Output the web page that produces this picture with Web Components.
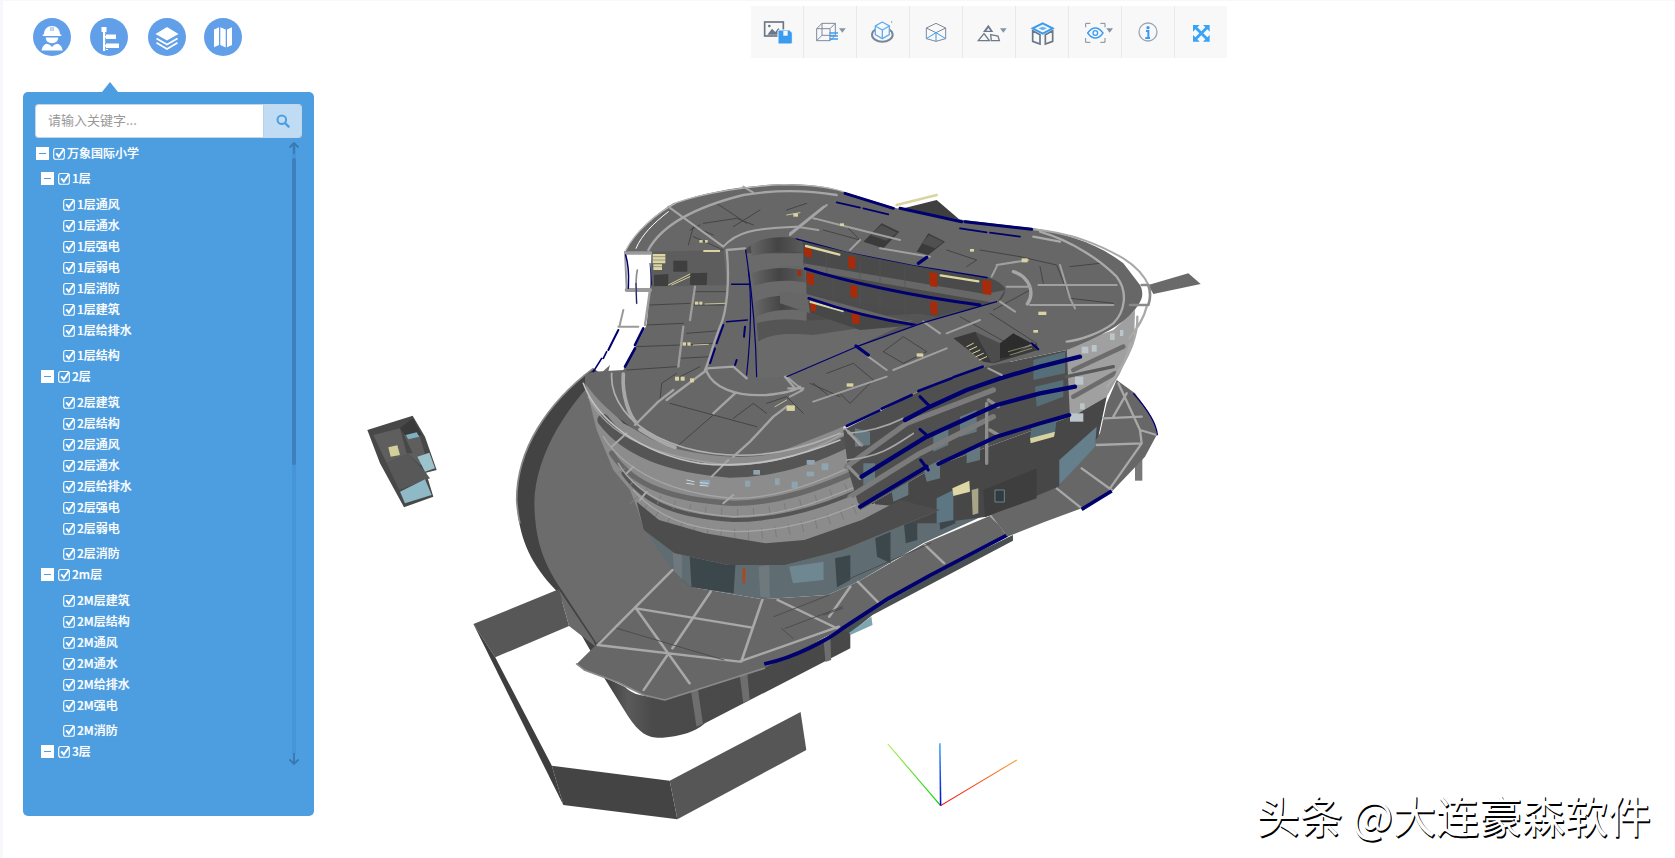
<!DOCTYPE html>
<html lang="zh"><head><meta charset="utf-8"><title>BIM</title>
<style>html,body{margin:0;padding:0;background:#f6f8fc;overflow:hidden}</style></head>
<body>
<bim-app>
  <bim-tree>
    <bim-node kind="root" label="万象国际小学">
      <bim-node kind="group" label="1层">
        <bim-node label="1层通风"></bim-node><bim-node label="1层通水"></bim-node><bim-node label="1层强电"></bim-node><bim-node label="1层弱电"></bim-node><bim-node label="1层消防"></bim-node><bim-node label="1层建筑"></bim-node><bim-node label="1层给排水"></bim-node><bim-node last label="1层结构"></bim-node>
      </bim-node>
      <bim-node kind="group" label="2层">
        <bim-node label="2层建筑"></bim-node><bim-node label="2层结构"></bim-node><bim-node label="2层通风"></bim-node><bim-node label="2层通水"></bim-node><bim-node label="2层给排水"></bim-node><bim-node label="2层强电"></bim-node><bim-node label="2层弱电"></bim-node><bim-node last label="2层消防"></bim-node>
      </bim-node>
      <bim-node kind="group" label="2m层">
        <bim-node label="2M层建筑"></bim-node><bim-node label="2M层结构"></bim-node><bim-node label="2M通风"></bim-node><bim-node label="2M通水"></bim-node><bim-node label="2M给排水"></bim-node><bim-node label="2M强电"></bim-node><bim-node last label="2M消防"></bim-node>
      </bim-node>
      <bim-node kind="group" label="3层"></bim-node>
    </bim-node>
  </bim-tree>
</bim-app>
<script>
const FONT = '"Noto Sans CJK SC","Noto Sans",sans-serif';
function def(name, html, onInit){
  customElements.define(name, class extends HTMLElement{
    connectedCallback(){
      if(this.shadowRoot) return;
      const r=this.attachShadow({mode:'open'});
      r.innerHTML = typeof html==='function' ? html(this) : html;
      if(onInit) onInit(this,r);
    }
  });
}

/* ---------- 3D model ---------- */
const lines=(c,w,ds)=>`<path fill="none" stroke="${c}" stroke-width="${w}" stroke-linecap="round" d="${ds}"/>`;
const MODEL=`
<style>:host{display:block;position:absolute;left:337px;top:169px;width:1000px;height:688px}svg{display:block}</style>
<svg width="1000" height="688" viewBox="0 0 3000 2064" stroke-linejoin="round">
<defs>
<linearGradient id="w" x1="0" x2="1" y1="0" y2="0"><stop offset="0" stop-color="#666"/><stop offset=".5" stop-color="#444"/><stop offset="1" stop-color="#5c5c5c"/></linearGradient>
<linearGradient id="base" x1="0" x2="1" y1="0" y2="0"><stop offset="0" stop-color="#3c3c3c"/><stop offset=".1" stop-color="#5a5a5a"/><stop offset=".2" stop-color="#4a4a4a"/><stop offset="1" stop-color="#484848"/></linearGradient>
<linearGradient id="ax1" gradientUnits="userSpaceOnUse" x1="1256" y1="917" x2="1118" y2="732"><stop offset="0" stop-color="#00d000"/><stop offset="1" stop-color="#a8f050"/></linearGradient>
<linearGradient id="ax2" gradientUnits="userSpaceOnUse" x1="1256" y1="917" x2="1254" y2="730"><stop offset="0" stop-color="#0000e0"/><stop offset="1" stop-color="#40a8f0"/></linearGradient>
<linearGradient id="ax3" gradientUnits="userSpaceOnUse" x1="1256" y1="917" x2="1455" y2="780"><stop offset="0" stop-color="#f00000"/><stop offset="1" stop-color="#f8a030"/></linearGradient>
</defs>

<!-- small pavilion -->
<path fill="#484848" d="M82 780L218 737L255 800L290 900L258 908L280 980L192 1012L120 880Z"/>
<path fill="#5e5e5e" d="M100 795L180 775L200 850L218 850L192 795L218 790L240 800L262 880L240 885L205 852L140 880Z"/>
<path fill="#3a3a3a" d="M180 775L218 745L245 795L200 800Z"/>
<path fill="#585858" d="M140 880L205 852L255 905L270 925L178 960Z"/>
<path fill="#8fb9c6" d="M180 965L255 928L275 975L195 1000Z"/>
<path fill="#9cc2cc" d="M232 860L268 848L285 895L255 905Z"/>
<path fill="#7fb0c0" d="M197 795L230 787L238 800L205 808Z"/>
<path fill="#d4cf9a" d="M145 832L172 826L180 855L152 860Z"/>

<!-- big terrace disc -->
<path fill="#434343" d="M760 595C620 700 530 840 530 990C535 1100 570 1180 647 1260L750 1440L790 1520L1000 1500L1100 1100L900 700Z"/>
<path fill="#6c6c6c" d="M810 585C690 690 585 850 583 1000C585 1110 610 1180 665 1260L770 1420L1010 1200L900 1000L780 700Z"/>
<path fill="none" stroke="#8a8a8a" stroke-width="5" d="M760 595C620 700 530 840 530 990C532 1020 535 1040 540 1060"/>

<!-- outer retaining walls -->
<g transform="translate(360 990) scale(1.148 1)">
<path fill="#575757" d="M35 372L258 268L285 378L92 472Z"/>
<path fill="#3e3e3e" d="M35 372L92 472L240 797L270 915Z"/>
<path fill="#6a6a6a" d="M258 268L285 378L355 440L350 425Z"/>
<path fill="#444" d="M240 797L548 842L568 958L270 915Z"/>
<path fill="#565656" d="M548 842L890 636L905 750L568 958Z"/>

<!-- base block -->
<path fill="url(#base)" d="M375 530L440 650C470 700 490 715 530 713C590 708 620 690 640 670L1020 445L1020 380L800 490L530 600L430 560Z"/>
<path fill="#6e6e6e" d="M604 575L622 570L635 672L618 680ZM730 515L750 510L757 600L740 608ZM950 420L968 415L970 480L955 486Z"/>
<path fill="#fff" d="M420 545C440 580 470 590 515 590L480 570Z"/>
<path fill="#4a4f52" d="M985 385L1230 225L1445 105L1445 122L1078 345L1020 400Z"/>
<path fill="#7fa5b0" d="M1017 398L1075 350L1078 375L1020 405Z"/>

<!-- glazing under the slab -->
<path fill="#5f6c72" d="M465 60L555 210L600 260L790 298L960 285L1040 245L1210 130L1420 20L1300 -30L1000 130L800 190L600 160Z"/>
<path fill="#3c474c" d="M600 165L720 190L715 280L605 262ZM980 175L1020 165L1020 240L985 262ZM1085 115L1125 95L1125 190L1090 170ZM1160 70L1195 50L1195 120L1165 130ZM1250 25L1290 5L1295 70L1255 90Z"/>
<path fill="#6f8791" d="M860 200L950 185L950 240L870 250Z"/>
<path fill="#6e787d" d="M780 200L808 195L810 295L785 290ZM555 150L580 160L580 240L560 215Z"/>
<path fill="#a84a20" d="M738 205L746 205L745 250L738 250Z"/>

<!-- lower terrace plate -->
<path fill="#676767" d="M555 210L305 492L325 510L415 548L480 585L535 600L795 505L1000 385L1230 230L1430 110L1390 45L1215 130L1040 245L960 285L790 298L600 260Z"/>
${lines('#a8a8a8',7,'M555 210L360 435M460 325L760 382M655 275L555 445M460 325L600 550M360 435L730 485M545 460L480 570M790 300L735 485M730 485L990 380M830 300L985 385M1040 245L1095 310M1215 135L1265 190M1385 45L1435 100M1020 260L965 350')}
${lines('#4a4a4a',2.5,'M410 385L690 480M820 350L965 285M850 385L1000 320M840 385L870 415M950 345L1000 325M1000 245L1230 130')}
${lines('#8a8a8a',5,'M305 492L325 510L415 548L480 585L535 600L795 505')}
<path fill="none" stroke="#00006e" stroke-width="11" d="M795 492C880 470 960 420 1000 385C1060 340 1100 310 1120 295L1230 225L1430 105"/>

<!-- axis triad -->
<path fill="none" stroke="url(#ax1)" stroke-width="3" d="M1256 917L1118 732"/>
<path fill="none" stroke="url(#ax2)" stroke-width="4" d="M1256 917L1254 730"/>
<path fill="none" stroke="url(#ax3)" stroke-width="3" d="M1256 917L1455 780"/>
</g>

<!-- right terrace & wall under floors -->
<g transform="translate(1320 0)">
<rect x="1065" y="860" width="22" height="72" fill="#787878"/>
<path fill="#676767" d="M1010 630L1065 670C1110 730 1130 760 1130 795L1095 860L995 965L905 1015L795 1055L682 1100L630 1030L830 950L960 790L980 700Z"/>
${lines('#a8a8a8',7,'M1015 640L1080 780L1130 795M1040 670L1000 740M970 745L1085 740M950 825L1085 820M1080 780L1085 820L990 955M905 895L995 960M830 955L905 1015')}
<path fill="none" stroke="#00006e" stroke-width="4" d="M1060 670C1100 715 1130 760 1132 795"/>
<path fill="none" stroke="#00006e" stroke-width="11" d="M905 1018L995 963"/>
<path fill="#474747" d="M240 1020L475 885L870 740L980 680L955 800L835 950L620 1040L470 1060L300 1060Z"/>
<path fill="#65808c" d="M838 870L950 770L945 830L838 945Z"/>
<path fill="#3e3e3e" d="M610 960L770 895L770 985L615 1040Z"/>
<path fill="#5d7684" d="M470 985L520 960L520 1050L470 1060Z"/>
<path fill="#dcd7a4" d="M517 955L568 932L570 965L520 978Z"/>
<path fill="#a8a488" d="M575 960L595 955L595 1030L578 1035Z"/>
<rect x="645" y="960" width="28" height="36" fill="#2f3b40" stroke="#8aa" stroke-width="2"/>
<path fill="#cfcb9c" d="M240 1020L285 1000L285 1040L240 1050Z"/>
</g>

<!-- stacked floors, left lobe -->
<path fill="#8c8c8c" d="M735 640L770 780L820 900L870 960L894 1020L911 1080L1003 1150L1164 1185L1336 1185L1508 1140L1800 1020L1570 1000L1530 880L1510 770L1250 855L1000 835L850 760Z"/>
${lines('#555',36,'M790 750C850 830 960 890 1170 905C1300 905 1420 865 1520 815')}
${lines('#a2a2a2',4,'M745 680C800 800 960 865 1170 885C1300 885 1420 845 1510 790')}
${lines('#686868',16,'M815 850C880 950 1000 990 1180 1000C1320 1000 1450 950 1560 900')}
${lines('#555',12,'M850 910C920 1010 1030 1040 1180 1050C1320 1050 1450 1010 1560 960')}
<path fill="none" stroke="#7c7c7c" stroke-width="34" stroke-dasharray="3 38" d="M880 990C950 1060 1040 1085 1180 1095C1320 1095 1450 1060 1560 1010"/>
<path fill="none" stroke="#7c7c7c" stroke-width="26" stroke-dasharray="3 45" d="M845 900C915 1000 1030 1020 1180 1030C1320 1030 1450 985 1560 935"/>
${lines('#a5a5a5',4,'M790 800C860 910 1000 970 1180 985C1320 985 1450 930 1555 880M835 880C900 990 1030 1030 1180 1040C1330 1040 1450 990 1560 945M880 960C950 1040 1040 1075 1180 1085C1320 1085 1450 1050 1560 1000')}
<path fill="#4d4d4d" d="M890 995L957 1050L1095 1090L1278 1120L1393 1110L1565 1050L1680 990L1800 1020L1508 1140L1336 1185L1164 1185L1003 1150L911 1080Z"/>
<g fill="#8fa4b0">
<rect x="1080" y="930" width="30" height="14"/><rect x="1240" y="900" width="20" height="14"/><rect x="1355" y="935" width="18" height="20"/><rect x="1215" y="932" width="16" height="18"/><rect x="1305" y="925" width="14" height="20"/><rect x="1400" y="905" width="22" height="14"/><rect x="1445" y="880" width="20" height="20"/><rect x="1400" y="870" width="24" height="14"/>
</g>
${lines('#cfd8de',3,'M1040 930L1062 935M1040 940L1062 943M1080 938L1104 940M1080 946L1104 948')}
${lines('#a8a8a8',6,'M860 790L815 830M880 890L860 910M1165 870L1115 920M920 965L900 990M1180 975L1150 1000')}

<!-- courtyard interior -->
<path fill="#4c4c4c" d="M1215 200H2010V640H1215Z"/>
<path fill="#6a6a6a" d="M1215 250H1400V640H1215Z"/>
<path fill="url(#w)" d="M1232 222C1280 200 1340 200 1385 210L1395 250C1340 240 1290 245 1235 258Z"/>
<path fill="url(#w)" d="M1235 310C1280 292 1340 292 1395 297L1400 338C1340 328 1290 332 1240 348Z"/>
<path fill="url(#w)" d="M1245 395C1290 375 1350 372 1400 380L1405 422C1340 415 1290 420 1248 440Z"/>
<path fill="#555" d="M1250 460C1300 445 1350 445 1400 452L1900 420L1700 505L1400 510C1340 490 1290 495 1255 515Z"/>
<path fill="#6a6a6a" d="M1255 625L1255 515C1290 492 1340 488 1420 495L1720 450L1340 630Z"/>
<g transform="translate(1320 0)">
<path fill="#4a4a4a" d="M70 215L620 320L640 375L70 285Z"/>
<path fill="#676767" d="M70 280L615 372L675 360L650 400L80 300Z"/>
<path fill="#4d4d4d" d="M78 300L590 405L470 440L80 370Z"/>
<path fill="#676767" d="M0 285L70 290L80 300L0 292ZM0 365L80 372L420 465L240 480L0 400Z"/>
<path fill="#474747" d="M85 392L410 465L240 480L90 430Z"/>
<g fill="#a82a08">
<path d="M72 232L95 238L95 264L74 258ZM205 258L226 262L226 298L205 294ZM448 305L472 310L472 352L450 348ZM606 330L634 334L634 375L608 372Z"/>
<path d="M80 308L102 312L102 346L82 342ZM53 300L63 300L63 318L53 318ZM210 345L232 349L232 385L212 381ZM450 393L472 398L472 436L452 432Z"/>
<path d="M90 398L108 402L108 425L92 422ZM215 428L238 432L238 463L216 460Z"/>
</g>
${lines('#555',2,'M140 250L140 310M300 270L300 340M375 290L375 370M240 270L240 330M160 320L160 390M240 350L240 400M375 380L375 440M300 350L300 420')}
${lines('#ddd8a2',7,'M78 228L178 254M482 316L595 334M92 396L188 423')}
${lines('#00006e',9,'M52 205C200 245 400 285 620 320')}
${lines('#00006e',9,'M76 296C200 335 400 380 600 405')}
${lines('#00006e',8,'M86 385C200 425 300 450 412 466')}
</g>

<!-- right-hand wing behind top plate -->
<path fill="#6a6a6a" d="M2425 345L2545 310L2582 342L2440 372Z"/>
<path fill="#3f3f3f" d="M1790 90L1860 150L1670 120Z"/>
${lines('#d9d4a0',8,'M1670 105L1790 75')}

<!-- side elevation, right of the bend -->
<g transform="translate(1320 0)">
<path fill="#4f4f4f" d="M190 780L415 665L620 590L860 540L905 560L980 620L980 680L870 740L475 885L240 1020L205 900Z"/>
<path fill="#a0a0a0" d="M860 530L1000 480L1065 420L1062 520L1020 610L980 680L870 745Z"/>
${lines('#6c6c6c',14,'M880 600L1030 530M880 680L1005 610')}
${lines('#5a5a5a',10,'M860 620L1000 590')}
<g fill="#bcc6ca"><rect x="905" y="530" width="20" height="20"/><rect x="935" y="525" width="15" height="20"/><rect x="990" y="490" width="14" height="20"/><rect x="1020" y="480" width="10" height="18"/><rect x="885" y="620" width="25" height="24"/><rect x="870" y="730" width="40" height="25"/><rect x="900" y="700" width="14" height="18"/></g>
<path fill="#566e78" d="M760 570L855 545L855 610L760 630ZM765 650L850 630L850 680L770 710ZM755 770L830 745L825 790L750 805Z"/>
<path fill="#d7d3a0" d="M750 805L825 785L822 800L752 820Z"/>
<path fill="#66787f" d="M540 740L590 720L590 785L540 800ZM460 800L505 770L505 825L460 845ZM560 840L600 820L600 870L560 880ZM335 965L385 935L385 975L340 995ZM430 895L480 870L480 925L440 935ZM225 775L270 785L270 825L225 830ZM250 880L285 880L285 930L250 945Z"/>
${lines('#7b7b7b',16,'M200 890L380 760L640 660M210 980L420 850L640 740')}
${lines('#8d8d8d',10,'M625 690L655 710M630 780L655 795M205 785L245 825M205 890L240 925M210 985L240 1010M620 700L620 880')}
${lines('#a7a7a7',5,'M205 790C270 785 320 770 370 745M200 870C300 860 340 830 400 790')}
${lines('#00006e',13,'M375 750L450 710L560 660L660 625L780 590L900 560')}
${lines('#00006e',13,'M245 920L440 800L650 705L780 670L885 650')}
${lines('#00006e',12,'M240 1010L440 890M475 882L650 800L780 760L868 735')}
${lines('#00006e',9,'M420 680L450 710M420 778L445 800M422 870L445 900')}
${lines('#a9a9a9',7,'M1100 410C1090 450 1070 475 1048 505M1072 440C1075 500 1040 570 1010 610M1050 520C1040 580 1000 630 980 650')}
</g>

<!-- top plate -->
<path fill="#676767" fill-rule="evenodd" d="M855 245C885 190 940 135 1000 100C1100 65 1200 48 1330 42C1400 42 1460 48 1510 65L1670 115L1870 150L2080 175C2180 190 2280 225 2350 280L2400 345C2408 360 2408 375 2405 385C2390 425 2340 470 2270 500C2240 515 2210 528 2180 540L1940 590L1735 665L1510 770L1320 845C1240 870 1130 865 1000 835C900 800 800 730 735 640L735 615L760 605L850 600L920 465L930 350L935 245Z
M1215 240C1250 205 1310 195 1370 205L1520 245L1720 285L1940 320C1980 335 2000 350 1995 365C1990 385 1980 392 1970 395L1750 455L1550 530L1340 620L1250 625L1255 560L1250 450L1232 340Z"/>

<!-- wing, dark rooms -->
<path fill="#5d5d5d" d="M935 245L1150 240L1160 345L935 350Z"/>
<path fill="#3f3f3f" d="M1000 272L1042 272L1042 305L1000 305ZM942 315L985 312L985 348L942 348ZM1050 310L1102 308L1100 345L1050 345Z"/>
<path fill="#dcd7a2" d="M938 252H976V280H938ZM940 283H966V300H940Z"/>
${lines('#777',2,'M938 260H976M938 270H976M940 290H966')}
${lines('#d2cd9a',3,'M985 345L1050 312M995 345L1050 320')}
${lines('#9a9a9a',12,'M860 360L930 360')}
${lines('#9a9a9a',8,'M860 250L932 250')}
${lines('#9a9a9a',6,'M855 245L860 360M835 470L895 470M850 420L838 470')}
${lines('#8c8c8c',5,'M892 300C885 330 888 360 890 400')}

<!-- plate partitions -->
${lines('#3d3d3d',2.5,'M960 690L965 640L1010 610M990 700L1250 770M1120 735L1010 830M1180 745L1240 700L1280 730M930 405L1050 400M920 465L1030 460M890 530L1020 525M860 600L1010 590M1060 405L1160 405M1060 365L1160 365M1040 490L1140 482M1030 525L1120 520M1020 565L1110 560M1050 180L1080 165M1090 160L1190 145L1240 165M1180 170L1260 120M1340 120L1400 100M1045 225L1060 170L1120 195M1150 240L1060 200M1020 620L1080 590M1410 640L1500 680M1280 700L1340 680L1390 730M1130 100L1220 160')}
<g transform="translate(1320 0)">
${lines('#3d3d3d',2.5,'M100 640L150 680L180 670L210 700L280 630M140 610L220 580L280 630M310 545L370 580L440 545L370 500L310 545M540 440L700 530M630 430L770 520M720 260L830 285L870 385L1000 400M780 290L790 340M870 290L960 280M110 150L200 170L240 210L130 180M500 240L590 270L560 290M600 240L720 260M640 420L750 360')}
<path fill="#3b3b3b" d="M250 215L305 160L358 185L310 235ZM410 245L445 190L495 215L445 255Z"/>
<path fill="#505050" d="M270 195L305 165L352 188L318 212Z"/>
<path fill="#505050" d="M425 220L447 195L490 216L465 235Z"/>
<!-- stair void -->
<path fill="#3a3a3a" d="M520 505L585 485L700 550L770 520L775 540L640 580L610 575Z"/>
<path fill="#4c4c4c" d="M585 485L660 520L660 570L635 580Z"/>
<path fill="#2c2c2c" d="M660 520L700 490L755 520L690 560L660 565Z"/>
${lines('#d8d3a0',3,'M560 530L580 520M568 540L590 530M578 550L600 540M588 560L610 550M598 570L620 560')}
${lines('#b8b48a',2,'M685 545L755 525M690 555L755 535')}
${lines('#aaa',7,'M780 185C880 215 960 270 1010 320C1045 365 1035 425 1000 460C960 490 900 510 860 515')}
${lines('#a6a6a6',10,'M700 305C750 320 765 370 742 402')}
${lines('#a0a0a0',6,'M650 290L635 320M660 395L705 425M680 350L750 350M840 285L870 385L885 415M775 345L1010 345M750 405L1000 405M430 455L480 490M625 595L665 615M195 775L240 825M20 620L68 660L30 680M265 560L320 600M100 695L320 620M340 600L500 535M500 490L600 450M130 110L30 190M240 210L210 240M650 285L745 270M100 145L360 210M300 235L450 260M440 260L415 280M115 180L50 170')}
${lines('#aaa',7,'M760 200L840 215')}
${lines('#a8a8a8',6,'M760 178C880 190 960 225 1030 265C1070 290 1095 320 1108 350')}
${lines('#8a8a8a',8,'M1085 345L1105 345C1112 365 1112 385 1105 405L1050 405')}
${lines('#00006e',9,'M195 70L340 115M360 115L545 155M555 155L755 178')}
${lines('#00006e',5,'M170 97L240 113M250 115L325 133M540 175L620 187M630 188L720 200')}
${lines('#00006e',8,'M200 768L298 722M305 716L395 675M415 663L515 625M520 622L608 590')}
${lines('#00006e',3.5,'M20 620L230 530L430 458L650 395')}
${lines('#00006e',10,'M228 528L265 555M415 280L440 262')}
${lines('#00006e',6,'M755 520L775 538')}
<g fill="#d8d3a0"><rect x="725" y="265" width="18" height="12"/><rect x="775" y="425" width="24" height="10"/><rect x="760" y="480" width="14" height="8"/><rect x="410" y="550" width="20" height="10"/><rect x="200" y="640" width="20" height="10"/><rect x="20" y="708" width="24" height="14"/><rect x="570" y="237" width="12" height="8"/><rect x="180" y="160" width="12" height="8"/><rect x="40" y="130" width="14" height="10"/></g>
</g>

<!-- rings, left and centre -->
${lines('#fff',3,'M888 235C905 195 940 160 985 125')}
${lines('#a6a6a6',7,'M925 240C960 175 1050 115 1210 75C1300 60 1400 60 1490 75')}
${lines('#b5b5b5',4,'M858 240C885 185 950 130 1010 98C1090 70 1220 48 1330 44C1400 44 1460 50 1510 65')}
${lines('#a6a6a6',6,'M1150 230C1190 185 1240 175 1370 170M985 110L1150 230M1350 195L1460 105M1210 50L1240 68')}
${lines('#a4a4a4',7,'M1160 240C1170 330 1160 430 1140 470C1120 520 1105 580 1095 600M1160 240L1215 235')}
${lines('#9c9c9c',7,'M1065 350L1050 450M1030 470L1015 590M930 360L915 465')}
${lines('#b0b0b0',5,'M815 610C810 690 870 760 950 800C1050 850 1180 870 1320 845C1400 830 1450 810 1500 790')}
${lines('#a8a8a8',11,'M850 612C845 680 870 740 890 760M900 778C950 810 970 820 1005 832')}
${lines('#c0c0c0',5,'M730 640C770 750 900 850 1080 880C1250 900 1400 850 1500 810')}
${lines('#a4a4a4',7,'M885 765L955 695L1000 660M1100 600L980 690M1180 860L1230 815L1300 740L1340 710M1100 605C1120 650 1180 680 1280 675C1330 670 1370 660 1380 650M1100 595L1180 590M1180 590L1220 625M1120 730L1185 670M1335 620L1365 655M1345 655L1390 655')}
${lines('#00006e',3.5,'M1217 240C1225 300 1245 400 1250 620')}
${lines('#00006e',3.5,'M1225 300C1235 380 1232 500 1220 615')}
${lines('#00006e',4.5,'M1175 343L1230 343M1160 455L1222 450M857 255C870 300 865 340 865 355')}
${lines('#00006e',2.5,'M888 340L890 400M930 280L935 345')}
${lines('#00006e',6,'M1215 470L1212 500M1150 465L1130 520M1125 535L1110 580M1190 570L1185 585')}
${lines('#00006e',8,'M910 475L885 525M885 535L855 590')}
${lines('#00006e',6,'M835 480L805 540')}
${lines('#00006e',5,'M800 545L790 565M785 565L760 605')}
<g fill="#d8d3a0"><rect x="1005" y="620" width="12" height="12"/><rect x="1022" y="620" width="12" height="12"/><rect x="1065" y="395" width="10" height="9"/><rect x="1078" y="395" width="9" height="9"/><rect x="1028" y="517" width="10" height="10"/><rect x="1042" y="517" width="10" height="10"/><rect x="1078" y="210" width="10" height="8"/><rect x="1095" y="210" width="8" height="8"/><rect x="1090" y="240" width="50" height="6"/><rect x="1340" y="706" width="24" height="16"/><rect x="1050" y="625" width="12" height="12"/></g>
${lines('#d8d3a0',2.5,'M1095 402L1155 400M1060 525L1105 523M1305 710L1340 690M1340 135L1380 128')}
</svg>`;
def('bim-model', MODEL);

/* ---------- toolbar ---------- */
const G='#7d8a9e', B='#3a9cf0';
const tri=(x)=>`<path fill="#8494a8" d="M${x} 85h20l-10 13z"/>`;
const ICONS=[
`<rect x="74" y="66" width="56" height="42" fill="none" stroke="#6b7686" stroke-width="5"/><path fill="#6b7686" d="M82 104l14-18 10 10 9-12 13 20z"/><circle cx="88" cy="78" r="4" fill="#6b7686"/><path fill="#3a9cf0" stroke="#f8f8f8" stroke-width="3" d="M118 90h30l9 8v30a4 4 0 0 1-4 4h-35a4 4 0 0 1-4-4v-34a4 4 0 0 1 4-4z"/><rect x="130" y="93" width="13" height="14" fill="#f8f8f8"/>`,
`<path fill="none" stroke="${G}" stroke-width="3" d="M230 86l16-16h40v36l-16 16h-40zM230 86h40v36M270 86l16-16M246 70v36h40M246 106l-16 16"/><path fill="none" stroke="${B}" stroke-width="4" d="M268 99h26M268 108h26M268 117h26"/>${tri(297)}`,
`<ellipse cx="427" cy="104" rx="31" ry="21" fill="none" stroke="#7a8696" stroke-width="6"/><path fill="#f8f8f8" stroke="#62aef0" stroke-width="4" d="M427 66l21 12v26l-21 12-21-12V78z"/><path fill="none" stroke="#62aef0" stroke-width="4" d="M406 78l21 12 21-12M427 90v26"/><circle cx="455" cy="66" r="2" fill="#7a8696"/>`,
`<path fill="none" stroke="${G}" stroke-width="3" d="M588 70l29 14v32l-29 8-29-8V84zM559 84l29 14 29-14"/><path fill="none" stroke="${B}" stroke-width="3" d="M588 98v26M559 116l29-18 29 18"/>`,
`<path fill="#6e7a8c" d="M745 74l-16 22h31z"/><path fill="#f8f8f8" d="M745 84l-6 8h12z"/><path fill="none" stroke="#6e7a8c" stroke-width="4" d="M732 101l-17 21h33zM752 104l22 4 4 14h-24z"/>${tri(780)}`,
`<path fill="none" stroke="${B}" stroke-width="6" d="M908 70l30 15-30 16-30-16z"/><path fill="#6ab4f4" d="M908 80l13 5-13 6-13-6z"/><path fill="none" stroke="#6b7686" stroke-width="5" d="M878 92v32l22 8v-28zM938 92v32l-22 8v-28z"/>`,
`<path fill="none" stroke="${G}" stroke-width="3" d="M1037 82V70h14M1081 70h14v12M1095 114v13h-14M1051 127h-14v-13"/><path fill="none" stroke="${B}" stroke-width="4" d="M1043 99c14-20 32-20 46 0-14 20-32 20-46 0z"/><circle cx="1066" cy="99" r="7" fill="none" stroke="${B}" stroke-width="4"/>${tri(1099)}`,
`<circle cx="1224" cy="96" r="27" fill="none" stroke="#9aa6b6" stroke-width="4"/><circle cx="1224" cy="83" r="5" fill="${B}"/><path fill="none" stroke="${B}" stroke-width="6" d="M1218 93h7v20M1216 114h14"/>`,
`<path fill="#38a4f8" d="M1359 75h20l-7 7 12 12 12-12-7-7h20v20l-7-7-12 12 12 12 7-7v20h-20l7-7-12-12-12 12 7 7h-20v-20l7 7 12-12-12-12-7 7z"/>`
];
def('bim-toolbar',`<style>
:host{display:flex;background:#f8f8f8;height:52px;flex:none}
.c{width:53px;height:52px;box-sizing:border-box;border-right:1px solid #e9e9e9}
.c:last-of-type{border:0;width:52px}
svg{display:block}
</style>`+ICONS.map((s,i)=>`<div class="c"><svg width="${i==8?52:53}" height="52" viewBox="${33+159*i} 18 ${i==8?156:159} 156">${s}</svg></div>`).join(''));

/* ---------- round nav buttons ---------- */
const NAV=[
`<path fill="#fff" d="M11 16.500C11 11 14.500 8 19 8s8 3 8 8.500h1.300v1.500H9.700v-1.500zM17.500 8.500h3v5h-3z"/><path fill="#629fe9" d="M17.500 9h.9v4h-.9zM19.600 9h.9v4h-.9z"/><path fill="#fff" d="M12.800 19.500h12.400c0 3.600-2.700 5.700-6.200 5.700s-6.200-2.100-6.200-5.700zM13.500 25.700l3.300 1 2.200 2.300 2.200-2.300 3.300-1c2.500.8 3.800 2.500 4.300 3.800l.9 3H8.500l.9-3c.5-1.300 1.800-3 4.100-3.800z"/>`,
`<path fill="#fff" d="M11.500 9h5v5h-1.300v19h-2.200V14h-1.500zM16 16.500h10v4.500H16zM16 25.500h13v4.500H16z"/><path fill="#fff" d="M15 18h2v1.500h-2zM15 27h2v1.500h-2zM16 31h2v1h-2z"/>`,
`<path fill="#fff" d="M19 9l11.500 7L19 22.500 7.500 16z"/><path fill="none" stroke="#fff" stroke-width="1.800" d="M8.500 20.500L19 26.500l10.500-6M8.500 24.800L19 31l10.500-6.200"/>`,
`<path fill="#fff" d="M10 11.500l5-2.300V27l-5 2.300zM16.300 9.300l5.400 2.300v17.800l-5.400-2.300zM23 11.600l5-2.300v17.700l-5 2.300z"/>`
];
def('bim-nav',`<style>
:host{display:flex;height:38px;padding-left:10px}
.b{width:38px;height:38px;border-radius:50%;background:#629fe9;display:block;flex:none}
.b:nth-of-type(2){margin-left:19px}.b:nth-of-type(3){margin-left:20px}.b:nth-of-type(4){margin-left:18px}
svg{display:block}
</style>`+NAV.map(s=>`<div class="b"><svg width="38" height="38" viewBox="0 0 38 38">${s}</svg></div>`).join(''));

/* ---------- search ---------- */
def('bim-search',`<style>
:host{display:flex;height:34px;box-sizing:border-box;font:13px ${FONT};border-radius:3px;overflow:hidden;border:1px solid #c4d6e6}
.i{flex:1;background:#fff;color:#999;padding-left:12px;line-height:30px;height:32px}
.s{width:37px;background:#c0dcf5;border-left:1px solid #b5d2ea;display:flex;align-items:center;justify-content:center}
</style><div class="i">请输入关键字...</div><div class="s"><svg width="14" height="14" viewBox="0 0 14 14"><circle cx="5.800" cy="5.800" r="4.300" fill="none" stroke="#4c9ee1" stroke-width="2"/><path stroke="#4c9ee1" stroke-width="2.400" stroke-linecap="round" d="M9 9l3.600 3.600"/></svg></div>`);

/* ---------- tree ---------- */
const CHECK=`<svg width="13" height="13" viewBox="0 0 13 13"><rect x=".7" y="1.500" width="10.600" height="10.800" rx="2" fill="none" stroke="#fff" stroke-width="1.100"/><path fill="none" stroke="#fff" stroke-width="2" d="M3.200 6.300L5.800 9.500 11 2"/></svg>`;
def('bim-node',(el)=>{
  const k=el.getAttribute('kind')||'leaf', l=el.getAttribute('label');
  return `<style>
  :host{display:block;${el.hasAttribute('last')?'margin-top:4px;':''}}
  .r{display:flex;align-items:center;height:21px;white-space:nowrap;color:#fff;font:500 12px/21px ${FONT};text-shadow:0 0 1px rgba(255,255,255,.5)}
  .t{width:13px;height:13px;background:#fff;display:flex;align-items:center;justify-content:center;flex:none}
  .t i{display:block;width:7px;height:1.500px;background:#4c9ee1}
  .ck{display:block;height:13px;flex:none}
  .ck svg{display:block}
  .k{margin-left:1px;position:relative;top:-1px}
  .root{padding-left:1px}.root .ck{margin-left:4px}.root{margin-bottom:4px}
  .group{padding-left:6px}.group .ck{margin-left:4px}.group.open{margin-bottom:5px}
  .leaf{padding-left:28px}
  </style><div class="r ${k} ${el.children.length?'open':''}">${k==='leaf'?'':'<span class="t"><i></i></span>'}<span class="ck">${CHECK}</span><span class="k">${l}</span></div><slot></slot>`;
});
def('bim-tree',`<style>
:host{display:block;position:relative;margin-top:5px;height:calc(100% - 39px)}
.sb{position:absolute;left:257px;top:2px;width:4px;height:610px}
.tr{position:absolute;left:0;top:0;width:4px;height:100%;background:#4795d8;border-radius:2px}
.th{position:absolute;left:0;top:13px;width:4px;height:307px;background:#3f7fbb;border-radius:2px}
.up,.dn{position:absolute;left:-4px;width:12px;height:14px}
.up{top:-4px}.dn{bottom:-11px}
</style><slot></slot>
<div class="sb"><div class="tr"></div><div class="th"></div>
<svg class="up" viewBox="0 0 12 14"><path fill="none" stroke="#3a78ad" stroke-width="1.800" d="M6 13V2M1.500 6.500L6 2l4.500 4.500"/></svg>
<svg class="dn" viewBox="0 0 12 14"><path fill="none" stroke="#3a78ad" stroke-width="1.800" d="M6 1v11M1.500 7.500L6 12l4.500-4.500"/></svg></div>`);

/* ---------- sidebar panel ---------- */
def('bim-panel',`<style>
:host{display:block;position:relative;width:291px;height:724px;box-sizing:border-box;background:#4c9ee1;border-radius:5px;padding:12px 12px 0 12px}
.a{position:absolute;left:79px;top:-10px;width:0;height:0;border:8px solid transparent;border-top:0;border-bottom:10px solid #4c9ee1}
</style><div class="a"></div><bim-search></bim-search><slot></slot>`);

def('bim-watermark',`<style>
:host{display:block;position:absolute;right:24px;bottom:18px;font:400 43px/52px ${FONT};color:#fff;white-space:nowrap;text-shadow:1px 2px 0 #000,1px 1px 0 #000}
</style><slot></slot>`);

def('bim-app',`<style>
:host{display:block;width:1675px;height:858px;background:#f6f8fc;overflow:hidden;font-family:${FONT}}
.stage{position:relative;margin:1px 0 0 3px;width:1672px;height:857px;background:#fff;display:flex}
.side{flex:none;margin:17px 0 0 20px;width:291px;position:relative}
.side bim-panel{margin-top:36px}
.main{flex:1;position:relative;display:flex;justify-content:flex-start;padding:5px 0 0 437px;align-items:flex-start}
</style><div class="stage"><bim-model></bim-model>
<div class="side"><bim-nav></bim-nav><bim-panel><slot></slot></bim-panel></div>
<div class="main"><bim-toolbar></bim-toolbar></div>
<bim-watermark>头条 @大连豪森软件</bim-watermark></div>`);
</script>
</body></html>
